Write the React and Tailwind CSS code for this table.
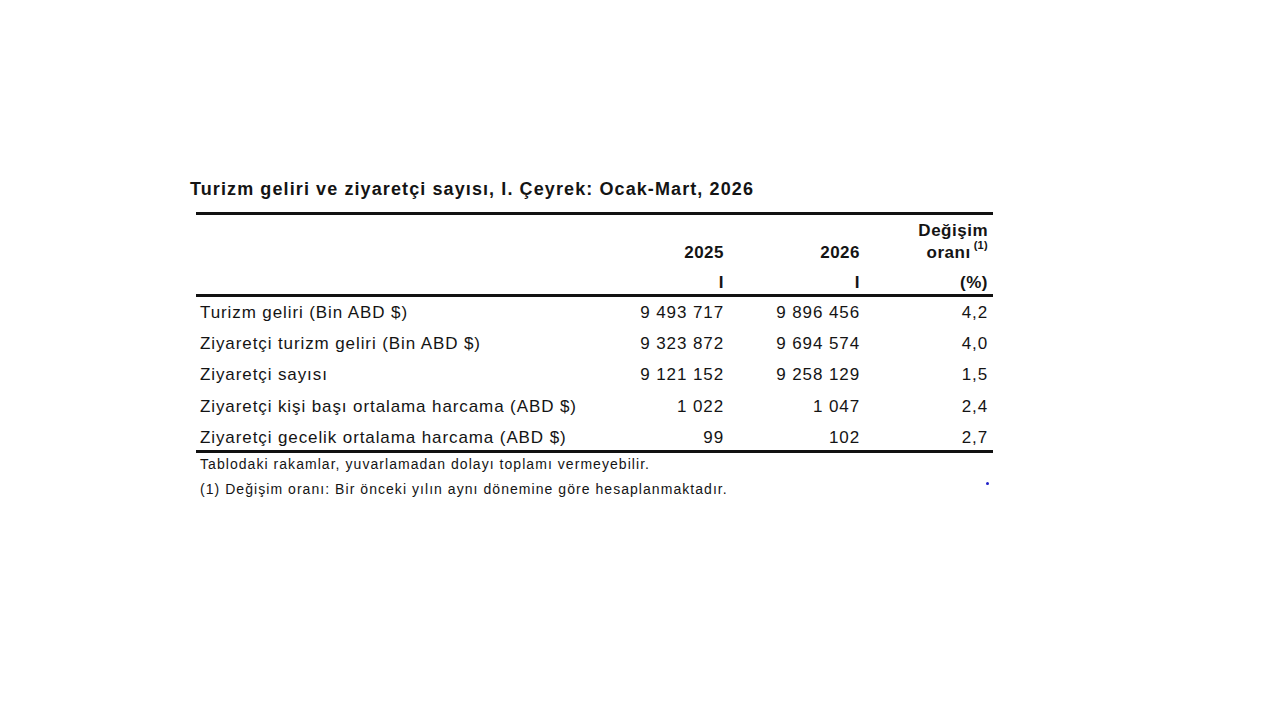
export default function App() {
  const rows = [
    ["Turizm geliri (Bin ABD $)", "9 493 717", "9 896 456", "4,2"],
    ["Ziyaretçi turizm geliri (Bin ABD $)", "9 323 872", "9 694 574", "4,0"],
    ["Ziyaretçi sayısı", "9 121 152", "9 258 129", "1,5"],
    ["Ziyaretçi kişi başı ortalama harcama (ABD $)", "1 022", "1 047", "2,4"],
    ["Ziyaretçi gecelik ortalama harcama (ABD $)", "99", "102", "2,7"],
  ];
  return (
    <div
      className="w-[1280px] h-[720px] bg-white text-[#141414] pt-[177px] pl-[190px]"
      style={{ fontFamily: '"Liberation Sans", Arial, sans-serif' }}
    >
      <div className="text-[18px] font-bold leading-[24px] tracking-[1.1px]">
        Turizm geliri ve ziyaretçi sayısı, I. Çeyrek: Ocak-Mart, 2026
      </div>
      <div className="ml-[6px] mt-[11px] w-[797px]">
        <div className="h-[3px] bg-[#111]" />
        <div className="grid grid-cols-[392px_136px_136px_128px] font-bold text-[17px] tracking-[0.5px] h-[79px]">
          <div />
          <div className="flex flex-col items-end justify-end">
            <div className="leading-[22px] mb-[8px]">2025</div>
            <div className="leading-[22px]">I</div>
          </div>
          <div className="flex flex-col items-end justify-end">
            <div className="leading-[22px] mb-[8px]">2026</div>
            <div className="leading-[22px]">I</div>
          </div>
          <div className="flex flex-col items-end justify-end">
            <div className="leading-[22px]">Değişim</div>
            <div className="leading-[22px] mb-[8px] flex items-start">
              <span>oranı</span>
              <span className="text-[11px] leading-[11px] ml-[3px] mt-[-2px] tracking-[0.3px]">(1)</span>
            </div>
            <div className="leading-[22px]">(%)</div>
          </div>
        </div>
        <div className="h-[3px] bg-[#111]" />
        <div className="text-[17px] tracking-[0.9px]">
          {rows.map((r) => (
            <div
              key={r[0]}
              className="grid grid-cols-[392px_136px_136px_128px] h-[31.25px] items-center"
            >
              <div className="pl-[4px]">{r[0]}</div>
              <div className="text-right">{r[1]}</div>
              <div className="text-right">{r[2]}</div>
              <div className="text-right">{r[3]}</div>
            </div>
          ))}
        </div>
        <div className="h-[3px] bg-[#111] -mt-[3px]" />
        <div className="text-[14px] tracking-[1.05px] pl-[4px]">
          <div className="leading-[22px]">
            Tablodaki rakamlar, yuvarlamadan dolayı toplamı vermeyebilir.
          </div>
          <div className="flex justify-between leading-[28px]">
            <span>(1) Değişim oranı: Bir önceki yılın aynı dönemine göre hesaplanmaktadır.</span>
            <span className="w-[3px] h-[3px] bg-[#2020c8] rounded-full mr-[4px] mt-[7px]" />
          </div>
        </div>
      </div>
    </div>
  );
}
